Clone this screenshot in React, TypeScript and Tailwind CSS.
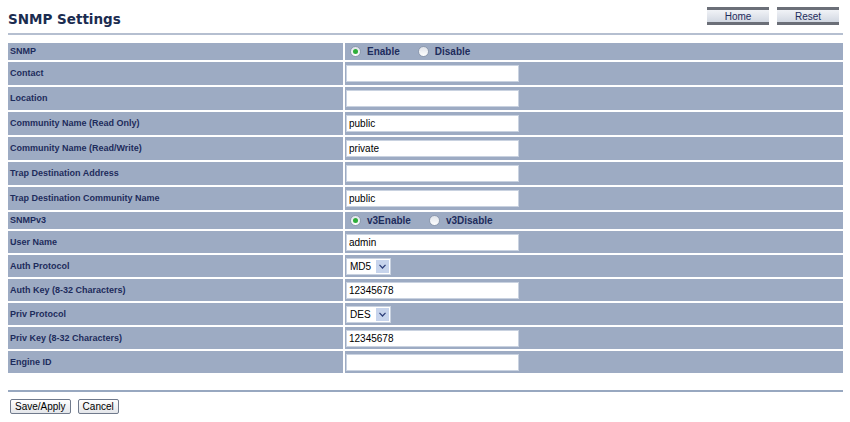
import React, { useState } from 'react';

type Row =
  | { label: string; kind: 'radio'; options: string[]; name: string }
  | { label: string; kind: 'text'; value: string }
  | { label: string; kind: 'select'; value: string; options: string[] };

const topRows: Row[] = [
  { label: 'Contact', kind: 'text', value: '' },
  { label: 'Location', kind: 'text', value: '' },
  { label: 'Community Name (Read Only)', kind: 'text', value: 'public' },
  { label: 'Community Name (Read/Write)', kind: 'text', value: 'private' },
  { label: 'Trap Destination Address', kind: 'text', value: '' },
  { label: 'Trap Destination Community Name', kind: 'text', value: 'public' },
];

const v3Rows: Row[] = [
  { label: 'User Name', kind: 'text', value: 'admin' },
  { label: 'Auth Protocol', kind: 'select', value: 'MD5', options: ['MD5', 'SHA'] },
  { label: 'Auth Key (8-32 Characters)', kind: 'text', value: '12345678' },
  { label: 'Priv Protocol', kind: 'select', value: 'DES', options: ['DES', 'AES'] },
  { label: 'Priv Key (8-32 Characters)', kind: 'text', value: '12345678' },
  { label: 'Engine ID', kind: 'text', value: '' },
];

const fontStyle = { fontFamily: '"Liberation Sans", Arial, sans-serif' };

const RadioDot = ({ checked }: { checked: boolean }) => (
  <span className="inline-flex h-[11px] w-[11px] items-center justify-center rounded-full border border-[#8f9bb0] bg-gradient-to-b from-[#dfe3ea] to-white">
    {checked && <span className="h-[5px] w-[5px] rounded-full bg-[#2fae3a]" />}
  </span>
);

const RadioGroup = ({ options }: { options: string[] }) => {
  const [sel, setSel] = useState(options[0]);
  return (
    <div className="flex items-center pl-[4px]">
      {options.map((o) => (
        <label key={o} className="mr-[18px] flex cursor-pointer items-center" onClick={() => setSel(o)}>
          <RadioDot checked={sel === o} />
          <span className="ml-[6px] text-[10px] font-bold text-[#1d2c5c]">{o}</span>
        </label>
      ))}
    </div>
  );
};

const FieldRow = ({ row, h }: { row: Row; h: string }) => (
  <div className={`flex gap-[2px] ${h}`}>
    <div className="flex w-[335px] items-center bg-[#9dabc3] pl-[2px] text-[9px] font-bold text-[#1d2c5c]">
      {row.label}
    </div>
    <div className="flex flex-1 items-center bg-[#9dabc3] pl-[1px]">
      {row.kind === 'radio' && <RadioGroup options={row.options} />}
      {row.kind === 'text' && (
        <input
          defaultValue={row.value}
          className="h-[17px] w-[173px] border border-[#c9d2e0] bg-white px-[2px] text-[10px] text-black outline-none"
        />
      )}
      {row.kind === 'select' && (
        <div className="flex h-[17px] w-[45px] items-center border border-[#c9d2e0] bg-white pl-[3px]">
          <span className="flex-1 text-[10px] text-black">{row.value}</span>
          <span className="mr-[1px] flex h-[13px] w-[13px] items-center justify-center bg-[#c7d4ec]">
            <svg width="7" height="5" viewBox="0 0 7 5">
              <path d="M0.5 0.8 L3.5 4 L6.5 0.8" fill="none" stroke="#2b3d78" strokeWidth="1.2" />
            </svg>
          </span>
        </div>
      )}
    </div>
  </div>
);

const TopButton = ({ label }: { label: string }) => (
  <button className="flex h-[18px] w-[62px] items-center justify-center border-y-[3px] border-y-[#6b6f78] bg-gradient-to-b from-[#f1f3f7] to-[#d2d8e2] text-[10px] text-[#1d2c5c]">
    {label}
  </button>
);

const App: React.FC = () => {
  return (
    <div className="h-[422px] w-[850px] bg-white" style={fontStyle}>
      <div className="flex items-start justify-between pl-[8px] pr-[11px] pt-[7px]">
        <h1 className="mt-[2px] text-[13.5px] font-bold text-[#1b2c50]" style={{ fontFamily: '"DejaVu Sans", Verdana, sans-serif' }}>
          SNMP Settings
        </h1>
        <div className="flex gap-[8px]">
          <TopButton label="Home" />
          <TopButton label="Reset" />
        </div>
      </div>
      <div className="mx-[8px] mt-[4px] h-[2px] w-[835px] bg-[#b5bfd0]" />

      <div className="ml-[8px] mt-[8px] flex w-[835px] flex-col gap-[2px] bg-white">
        <FieldRow row={{ label: 'SNMP', kind: 'radio', options: ['Enable', 'Disable'], name: 'snmp' }} h="h-[17px]" />
        {topRows.map((r) => (
          <FieldRow key={r.label} row={r} h="h-[23px]" />
        ))}
        <FieldRow row={{ label: 'SNMPv3', kind: 'radio', options: ['v3Enable', 'v3Disable'], name: 'v3' }} h="h-[17px]" />
        {v3Rows.map((r) => (
          <FieldRow key={r.label} row={r} h="h-[22px]" />
        ))}
      </div>

      <div className="ml-[8px] mt-[17px] h-[2px] w-[835px] bg-[#98a8c0]" />

      <div className="ml-[10px] mt-[7px] flex gap-[7px]">
        <button className="h-[15px] rounded-[2px] border border-[#707a8c] bg-gradient-to-b from-white to-[#e4e6ea] px-[4px] text-[10px] leading-none text-black">
          Save/Apply
        </button>
        <button className="h-[15px] rounded-[2px] border border-[#707a8c] bg-gradient-to-b from-white to-[#e4e6ea] px-[4px] text-[10px] leading-none text-black">
          Cancel
        </button>
      </div>
    </div>
  );
};

export default App;
